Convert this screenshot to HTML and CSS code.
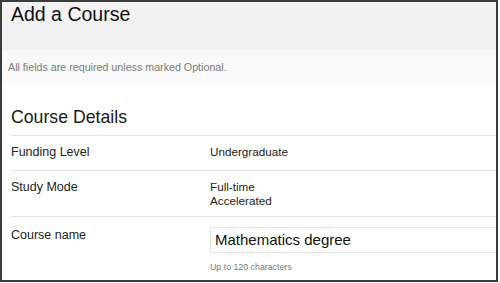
FILE: index.html
```html
<!DOCTYPE html>
<html>
<head>
<meta charset="utf-8">
<link rel="stylesheet" href="styles.css">
</head>
<body>
<div class="frame">
  <div class="page-header">
    <h1 class="title">Add a Course</h1>
  </div>
  <div class="notice">All fields are required unless marked Optional.</div>
  <div class="section">
    <h2 class="section-title">Course Details</h2>
    <div class="row row-single">
      <div class="label">Funding Level</div>
      <div class="value">Undergraduate</div>
    </div>
    <div class="row row-multi">
      <div class="label">Study Mode</div>
      <div class="value">Full-time<br>Accelerated</div>
    </div>
    <div class="row row-field">
      <div class="label">Course name</div>
      <div class="field">
        <div class="input">Mathematics degree</div>
        <div class="hint">Up to 120 characters</div>
      </div>
    </div>
  </div>
</div>
</body>
</html>
```

FILE: styles.css
```css
html, body {
  margin: 0;
  padding: 0;
  background: #ffffff;
}
body {
  font-family: "Liberation Sans", Arial, sans-serif;
  color: #222222;
}
.frame {
  width: 498px;
  height: 282px;
  box-sizing: border-box;
  border: 2px solid #3c3c3c;
  overflow: hidden;
  background: #ffffff;
}
.page-header {
  height: 48px;
  background: #f2f2f2;
  padding-left: 9px;
}
.title {
  margin: 0;
  font-weight: normal;
  font-size: 19.5px;
  line-height: 24px;
  color: #111111;
}
.notice {
  height: 34px;
  box-sizing: border-box;
  background: #f9f9f9;
  padding: 11px 0 0 6px;
  font-size: 10.7px;
  line-height: 13px;
  color: #7a7a7a;
}
.section {
  padding-left: 9px;
}
.section-title {
  margin: 23px 0 7px;
  font-weight: normal;
  font-size: 17.7px;
  line-height: 21px;
  color: #1a1a1a;
}
.row {
  display: grid;
  grid-template-columns: 199px 1fr;
  border-top: 1px solid #e6e6e6;
  box-sizing: border-box;
}
.row-single {
  height: 35px;
  padding-top: 9px;
}
.row-multi {
  height: 46px;
  padding-top: 9px;
}
.row-field {
  padding-top: 10px;
}
.label {
  font-size: 12.5px;
  line-height: 14px;
  color: #222222;
}
.value {
  font-size: 11.7px;
  line-height: 14px;
  color: #222222;
}
.row-field .label {
  padding-top: 1px;
}
.input {
  height: 26px;
  box-sizing: border-box;
  border: 1px solid #e2e2e2;
  border-right: none;
  background: #ffffff;
  padding: 3px 0 0 4px;
  font-size: 15px;
  line-height: 18px;
  color: #111111;
}
.hint {
  margin-top: 9px;
  font-size: 8.8px;
  line-height: 11px;
  color: #777777;
}
```
